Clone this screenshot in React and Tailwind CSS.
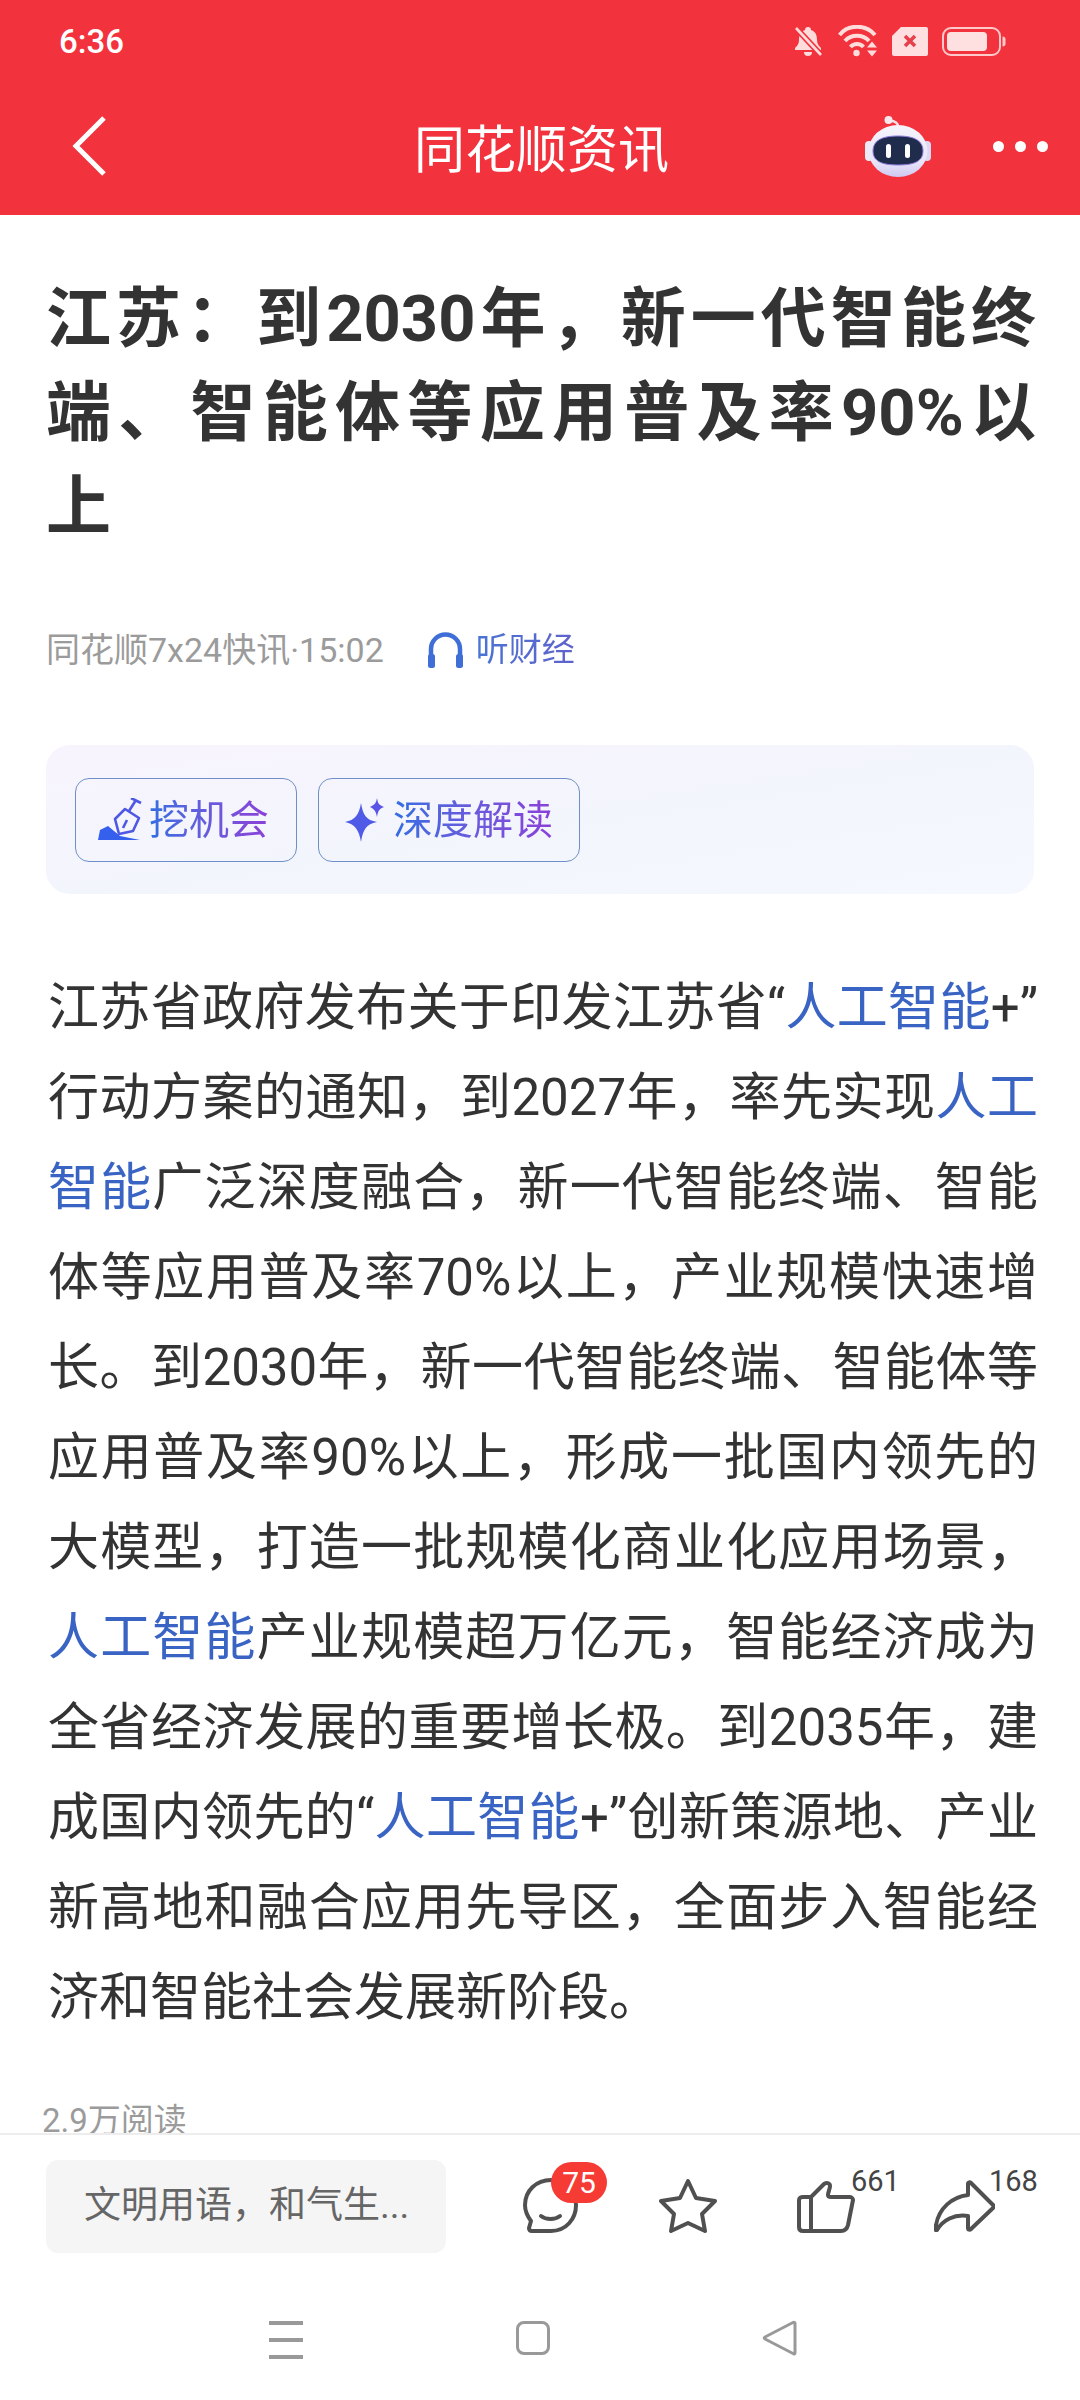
import React from "react";

const C = "\uFF0C";
const K = "\uFF1A";
const Link = ({ children }) => <span className="text-[#3a64c4]">{children}</span>;

const lines = [
  <>江苏省政府发布关于印发江苏省“<Link>人工智能</Link>+”</>,
  <>行动方案的通知{C}到2027年{C}率先实现<Link>人工</Link></>,
  <><Link>智能</Link>广泛深度融合{C}新一代智能终端、智能</>,
  <>体等应用普及率70%以上{C}产业规模快速增</>,
  <>长。到2030年{C}新一代智能终端、智能体等</>,
  <>应用普及率90%以上{C}形成一批国内领先的</>,
  <>大模型{C}打造一批规模化商业化应用场景{C}</>,
  <><Link>人工智能</Link>产业规模超万亿元{C}智能经济成为</>,
  <>全省经济发展的重要增长极。到2035年{C}建</>,
  <>成国内领先的“<Link>人工智能</Link>+”创新策源地、产业</>,
  <>新高地和融合应用先导区{C}全面步入智能经</>,
];

function StatusIcons() {
  return (
    <div className="flex items-center">
      <svg width="30" height="32" viewBox="0 0 30 32" className="mr-[15px]">
        <path d="M15 2a3 3 0 0 1 3 3c5 1.500 6 6 6 10 0 4 2 6 4 8v2H2v-2c2-2 4-4 4-8 0-4 1-8.500 6-10a3 3 0 0 1 3-3z" fill="#ffdcdc" />
        <path d="M11 27h8a4 4 0 0 1-8 0z" fill="#ffdcdc" />
        <path d="M3 3l25 27" stroke="#f2323d" strokeWidth="6" />
        <path d="M3 3l25 27" stroke="#ffdcdc" strokeWidth="2.600" />
      </svg>
      <svg width="41" height="33" viewBox="0 0 41 33" className="mr-[13px]" fill="none">
        <path d="M1.500 10C10-1 28-1 37 10" stroke="#ffdcdc" strokeWidth="4" />
        <path d="M7 16c6-7 18-7 24 0" stroke="#ffdcdc" strokeWidth="4" />
        <path d="M12.500 22c3.500-4 9.500-4 13 0" stroke="#ffdcdc" strokeWidth="4" />
        <circle cx="18.500" cy="28" r="3.200" fill="#ffdcdc" />
        <path d="M29 22.500l5-6 5 6zM29 25.500h10l-5 6z" fill="#ffdcdc" />
      </svg>
      <svg width="36" height="29" viewBox="0 0 36 29" className="mr-[14px]">
        <path d="M9 0h25a2 2 0 0 1 2 2v25a2 2 0 0 1-2 2H2a2 2 0 0 1-2-2V9z" fill="#ffdfdf" />
        <path d="M13 9l10 10M23 9L13 19" stroke="#e8404a" strokeWidth="3.500" />
      </svg>
      <svg width="64" height="29" viewBox="0 0 64 29" fill="none">
        <rect x="1" y="1" width="57" height="27" rx="8" stroke="#ffc9cb" strokeWidth="2" />
        <rect x="5" y="5" width="40" height="19" rx="4" fill="#ffe0e0" />
        <path d="M60.500 9.500c2 0 3 1 3 2.500v5c0 1.500-1 2.500-3 2.500z" fill="#ffc9cb" />
      </svg>
    </div>
  );
}

function Robot() {
  return (
    <svg width="66" height="62" viewBox="0 0 66 62">
      <defs>
        <linearGradient id="shell" x1="0" y1="0" x2="0" y2="1">
          <stop offset="0" stopColor="#f6f4fb" />
          <stop offset="0.7" stopColor="#e9e6f8" />
          <stop offset="1" stopColor="#cfc9f2" />
        </linearGradient>
      </defs>
      <path d="M24 6c3-1 5 0 7 1.500 1 .8 2 2 2 4" stroke="#f6dfe6" strokeWidth="2.500" fill="none" />
      <circle cx="23.500" cy="5" r="4" fill="#f9e8ee" />
      <rect x="0" y="26" width="8" height="20" rx="4" fill="#ece9f7" />
      <rect x="58" y="26" width="8" height="20" rx="4" fill="#ddd8f3" />
      <ellipse cx="33" cy="36" rx="29.500" ry="26" fill="url(#shell)" />
      <path d="M8 36c0-10 8-15 25-15s25 5 25 15-8 14-25 14S8 46 8 36z" fill="#1f2c4c" stroke="#8d7be0" strokeWidth="1" />
      <rect x="21" y="29" width="5" height="14" rx="2.500" fill="#fff" />
      <rect x="40" y="29" width="5" height="14" rx="2.500" fill="#fff" />
    </svg>
  );
}

const Shovel = () => (
  <svg width="44" height="43" viewBox="0 0 44 43" fill="none">
    <path d="M0 42L2 32l8-4 12 10 20 4z" fill="#3560ee" />
    <path d="M27 11L17 21l4 15 14-3 6-13z" stroke="#4f58e4" strokeWidth="2.600" strokeLinejoin="round" />
    <path d="M31 13L38 2M33 0l10 5M29 22l-4 8" stroke="#4f58e4" strokeWidth="2.600" />
  </svg>
);

const Sparkle = () => (
  <svg width="40" height="44" viewBox="0 0 40 44">
    <path d="M16 5c2 12 5 17 16 19-11 2-14 8-16 20-2-12-6-18-16-20 10-2 14-7 16-19z" fill="#4f5ae6" />
    <path d="M32 0c1 6 2 7 7 9-5 2-6 4-7 10-1-6-3-8-7-10 4-2 6-3 7-9z" fill="#5a55e6" />
  </svg>
);

const ink = "#505050";

export default function App() {
  return (
    <div className="h-[2400px] w-[1080px] flex flex-col overflow-hidden bg-white font-['Roboto','Noto_Sans_CJK_SC',sans-serif]">
      <header className="h-[215px] shrink-0 bg-[#f2323c] text-white flex flex-col">
        <div className="h-[82px] flex items-center justify-between pl-[59px] pr-[74px]">
          <span className="text-[33px] font-medium leading-none">6:36</span>
          <StatusIcons />
        </div>
        <div className="relative flex-1 flex items-center justify-between pl-[72px] pr-[32px] pb-[5px]">
          <svg width="34" height="60" viewBox="0 0 34 60" fill="none">
            <path d="M32 2L4 30l28 28" stroke="#fff" strokeWidth="5" />
          </svg>
          <span className="absolute left-[414px] top-[29px] text-[51px] leading-[70px] font-['Noto_Sans_CJK_SC',sans-serif] font-normal">同花顺资讯</span>
          <div className="flex items-center gap-[62px]">
            <Robot />
            <div className="flex gap-[11px]">
              <span className="size-[11px] rounded-full bg-white" />
              <span className="size-[11px] rounded-full bg-white" />
              <span className="size-[11px] rounded-full bg-white" />
            </div>
          </div>
        </div>
      </header>

      <main className="flex-1 min-h-0 overflow-hidden relative">
        <h1 className="ml-[46px] w-[990px] pt-[57px] text-[#333333] text-[65px] leading-[94px] font-bold whitespace-nowrap">
          <div className="[text-align-last:justify]">江苏{K}到2030年{C}新一代智能终</div>
          <div className="[text-align-last:justify]">端、智能体等应用普及率90%以</div>
          <div>上</div>
        </h1>
        <div className="mt-[74px] pl-[46px] flex items-center text-[34px] leading-[44px] text-[#9b9b9b]">
          <span>同花顺7x24快讯·15:02</span>
          <svg className="ml-[44px] mr-[13px]" width="35" height="36" viewBox="0 0 35 36" fill="none">
            <path d="M3 33V17a14.500 14.500 0 0 1 29 0v16" stroke="#3f6fd6" strokeWidth="4.500" />
            <rect x="0" y="22" width="7" height="14" rx="2.500" fill="#3f6fd6" />
            <rect x="28" y="22" width="7" height="14" rx="2.500" fill="#3f6fd6" />
          </svg>
          <span className="text-[33px] bg-gradient-to-r from-[#4874d4] to-[#5f63cc] bg-clip-text text-transparent">听财经</span>
        </div>
        <section className="mt-[73px] ml-[46px] w-[988px] h-[149px] rounded-[24px] bg-gradient-to-br from-[#f8f4fd] via-[#f3f5fd] to-[#f5f8fe] flex items-center pl-[29px] gap-[21px]">
          <div className="w-[222px] h-[84px] rounded-[14px] border border-[#6e8fc8] flex items-center pl-[22px] gap-[7px]">
            <Shovel />
            <span className="mb-[6px] text-[40px] leading-[50px] bg-gradient-to-r from-[#2f6ee0] to-[#8a3fd8] bg-clip-text text-transparent font-['Noto_Sans_CJK_SC',sans-serif]">挖机会</span>
          </div>
          <div className="w-[262px] h-[84px] rounded-[14px] border border-[#6e8fc8] flex items-center pl-[26px] gap-[8px]">
            <Sparkle />
            <span className="mb-[6px] text-[40px] leading-[50px] bg-gradient-to-r from-[#2f6ee0] to-[#8a3fd8] bg-clip-text text-transparent font-['Noto_Sans_CJK_SC',sans-serif]">深度解读</span>
          </div>
        </section>
        <article className="mt-[69px] ml-[48px] w-[990px] text-[#333333] text-[51px] leading-[90px]">
          {lines.map((l, i) => (
            <div key={i} className="[text-align-last:justify] whitespace-nowrap">{l}</div>
          ))}
          <div>济和智能社会发展新阶段。</div>
        </article>
        <div className="mt-[56px] ml-[42px] text-[33px] leading-[44px] text-[#9b9b9b]">2.9万阅读</div>
      </main>

      <footer className="shrink-0 h-[267px] border-t-2 border-[#ededed] bg-white relative">
        <div className="flex items-center h-[136px] pl-[46px]">
          <div className="w-[400px] h-[93px] rounded-[12px] bg-[#f5f5f5] flex items-center pl-[38px] text-[37px] text-[#666] mt-[6px]">
            文明用语{C}和气生...
          </div>
          <div className="relative ml-[77px] w-[55px] h-[55px] mt-[5px]">
            <svg width="55" height="55" viewBox="0 0 55 55" fill="none">
              <path d="M28 2C13 2 2 13 2 27c0 7 3 12 6 16l-2 7c0 2 1 3 3 3h19c15 0 25-12 25-26S43 2 28 2z" stroke={ink} strokeWidth="4" strokeLinejoin="round" />
              <path d="M18 38c5 4 14 4 19 0" stroke={ink} strokeWidth="4" strokeLinecap="round" />
            </svg>
            <span className="absolute left-[28px] top-[-16px] w-[56px] h-[41px] rounded-full bg-[#f63a34] text-white text-[30px] leading-[41px] text-center">75</span>
          </div>
          <svg className="ml-[81px] mt-[5px]" width="58" height="55" viewBox="0 0 58 55" fill="none">
            <path d="M29 3l8 17 19 3-13 13 3 17-17-8-17 8 3-17L2 23l19-3z" stroke={ink} strokeWidth="4" strokeLinejoin="round" />
          </svg>
          <div className="relative ml-[80px] mt-[7px]">
            <svg width="58" height="53" viewBox="0 0 58 53" fill="none">
              <path d="M14 17L27 4c2-2 6-1 6 2 0 3-2 6-2 9 0 1 1 2 3 2h19c2 0 3 2 3 3l-5 25c-1 4-3 6-7 6H6c-2 0-4-1-4-4V20c0-2 2-3 4-3h8zM14 17v34" stroke={ink} strokeWidth="4" strokeLinejoin="round" />
            </svg>
            <span className="absolute left-[54px] top-[-17px] text-[29px] leading-[36px] text-[#444]">661</span>
          </div>
          <div className="relative ml-[79px] mt-[6px]">
            <svg width="61" height="52" viewBox="0 0 61 52" fill="none">
              <path d="M34 4c0-2 2-2 3-1l22 22c1 1 1 2 0 3L37 49c-1 1-3 1-3-1V36C20 34 9 40 3 50c-2 1-2-2-1-5C5 28 18 17 34 15z" stroke={ink} strokeWidth="4" strokeLinejoin="round" />
            </svg>
            <span className="absolute left-[55px] top-[-17px] text-[29px] leading-[36px] text-[#444]">168</span>
          </div>
        </div>
        <div className="absolute left-[269px] top-[186px] w-[34px] flex flex-col gap-[13px]">
          <span className="h-[4px] bg-[#999]" />
          <span className="h-[4px] bg-[#999]" />
          <span className="h-[4px] bg-[#999]" />
        </div>
        <span className="absolute left-[516px] top-[186px] w-[34px] h-[34px] rounded-[8px] border-[3px] border-[#999]" />
        <svg className="absolute left-[762px] top-[185px]" width="36" height="36" viewBox="0 0 36 36" fill="none">
          <path d="M33 3v30c0 1-1 1.500-2 .5L3 19c-1-.5-1-1.500 0-2L31 2.500c1-.5 2 0 2 .5z" stroke="#999" strokeWidth="3" strokeLinejoin="round" />
        </svg>
      </footer>
    </div>
  );
}
